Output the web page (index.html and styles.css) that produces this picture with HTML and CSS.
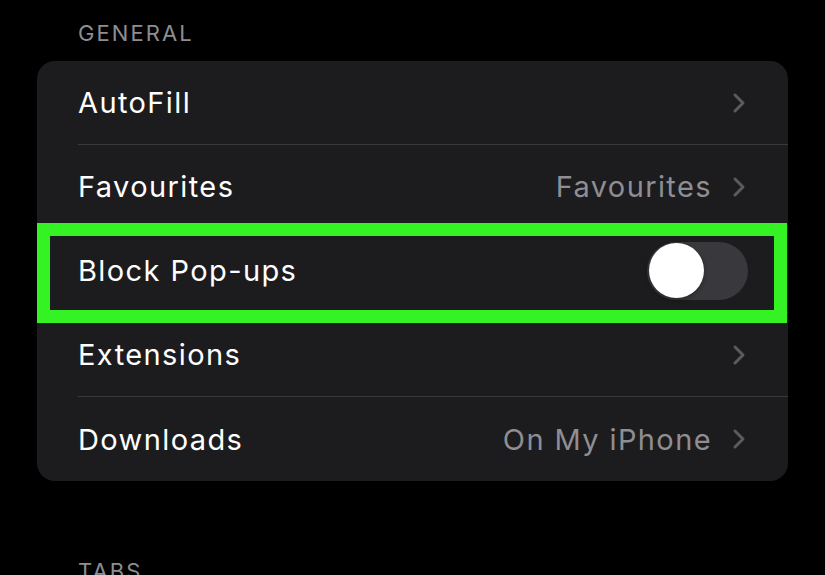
FILE: index.html
```html
<!DOCTYPE html>
<html>
<head>
<meta charset="utf-8">
<link rel="stylesheet" href="styles.css">
</head>
<body>
<div class="page">
  <div class="section-title">GENERAL</div>
  <div class="card">
    <div class="row">
      <div class="row-inner">
        <span class="label">AutoFill</span>
        <span class="right">
          <svg class="chev" viewBox="0 0 14 22" width="14" height="22"><path d="M3 3 L11 11 L3 19" fill="none" stroke="#5b5b5f" stroke-width="3" stroke-linecap="round" stroke-linejoin="round"/></svg>
        </span>
      </div>
    </div>
    <div class="row">
      <div class="row-inner">
        <span class="label">Favourites</span>
        <span class="right">
          <span class="value">Favourites</span>
          <svg class="chev" viewBox="0 0 14 22" width="14" height="22"><path d="M3 3 L11 11 L3 19" fill="none" stroke="#5b5b5f" stroke-width="3" stroke-linecap="round" stroke-linejoin="round"/></svg>
        </span>
      </div>
    </div>
    <div class="row highlighted">
      <div class="row-inner">
        <span class="label">Block Pop-ups</span>
        <span class="toggle"><span class="knob"></span></span>
      </div>
    </div>
    <div class="row">
      <div class="row-inner">
        <span class="label">Extensions</span>
        <span class="right">
          <svg class="chev" viewBox="0 0 14 22" width="14" height="22"><path d="M3 3 L11 11 L3 19" fill="none" stroke="#5b5b5f" stroke-width="3" stroke-linecap="round" stroke-linejoin="round"/></svg>
        </span>
      </div>
    </div>
    <div class="row last">
      <div class="row-inner">
        <span class="label">Downloads</span>
        <span class="right">
          <span class="value">On My iPhone</span>
          <svg class="chev" viewBox="0 0 14 22" width="14" height="22"><path d="M3 3 L11 11 L3 19" fill="none" stroke="#5b5b5f" stroke-width="3" stroke-linecap="round" stroke-linejoin="round"/></svg>
        </span>
      </div>
    </div>
  </div>
  <div class="section-title tabs">TABS</div>
</div>
</body>
</html>
```
FILE: styles.css
```css
html, body {
  margin: 0;
  padding: 0;
  background: #000;
  height: 100%;
  overflow: hidden;
}
.page {
  padding: 0 37px;
  font-family: Inter, "Noto Sans", sans-serif;
  color: #fff;
}
.section-title {
  color: #8d8d93;
  font-size: 22px;
  line-height: 26px;
  padding: 20px 0 15px 41px;
  letter-spacing: 2.1px;
}
.section-title.tabs {
  padding-top: 77px;
}
.card {
  background: #1c1c1e;
  border-radius: 18px;
  width: 751px;
}
.row {
  position: relative;
  height: 84px;
  padding-left: 41px;
}
.row-inner {
  height: 83px;
  display: flex;
  align-items: center;
  justify-content: space-between;
  padding-right: 42px;
  border-bottom: 1px solid #38383a;
}
.row.last .row-inner {
  border-bottom: none;
  height: 84px;
}
.label {
  font-size: 29px;
  letter-spacing: 1.4px;
}
.right {
  display: flex;
  align-items: center;
  gap: 20px;
}
.value {
  font-size: 29px;
  color: #8e8e93;
  letter-spacing: 1.4px;
}
.chev {
  display: block;
}
.highlighted::after {
  content: "";
  position: absolute;
  left: 0;
  right: 1px;
  top: -6px;
  bottom: -10px;
  border: 13px solid #35f224;
  z-index: 2;
}
.highlighted .row-inner {
  padding-right: 40px;
}
.toggle {
  width: 101px;
  height: 58px;
  border-radius: 29px;
  background: #39393d;
  position: relative;
  display: block;
}
.knob {
  position: absolute;
  left: 2px;
  top: 1.5px;
  width: 55px;
  height: 55px;
  border-radius: 50%;
  background: #fff;
  box-shadow: 0 2px 5px rgba(0,0,0,0.3);
}
```
